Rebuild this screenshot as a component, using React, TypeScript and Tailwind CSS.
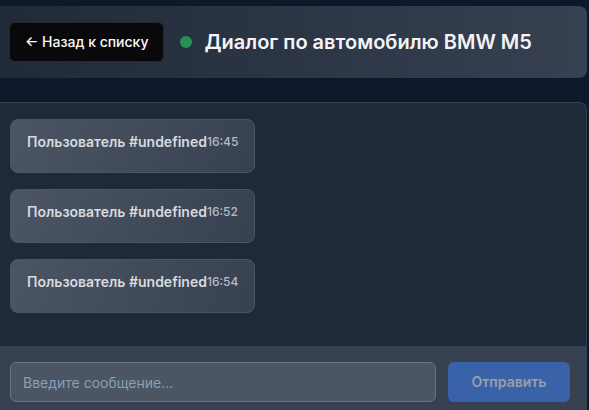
const messages = [
  { id: 1, author: 'Пользователь #undefined', time: '16:45' },
  { id: 2, author: 'Пользователь #undefined', time: '16:52' },
  { id: 3, author: 'Пользователь #undefined', time: '16:54' },
];

function Header() {
  return (
    <header className="flex items-center gap-4 rounded-r-lg bg-linear-to-r from-[#212a38] to-[#384152] py-4 pr-4 pl-[9px]">
      <button
        type="button"
        className="h-10 shrink-0 rounded-md border border-[#27272a] bg-[#09090b] px-[15px] text-sm font-medium text-[#fafafa]"
      >
        ← Назад к списку
      </button>
      <div className="flex min-w-0 items-center gap-3">
        <span className="size-3 shrink-0 rounded-full bg-[#279055]" />
        <h1 className="text-xl font-semibold whitespace-nowrap text-[#f3f4f6]">
          Диалог по автомобилю BMW M5
        </h1>
      </div>
    </header>
  );
}

function Message({ author, time }: { author: string; time: string }) {
  return (
    <li className="rounded-lg border border-[#4b5563] bg-linear-110 from-[#4b5563] to-[#374151] px-4 pt-3 pb-5">
      <div className="flex items-center text-[#d7dade]">
        <span className="text-sm font-semibold">{author}</span>
        <time className="text-xs font-medium text-[#b8bcc4]">{time}</time>
      </div>
    </li>
  );
}

function Composer() {
  return (
    <form
      className="flex gap-3 border-t border-[#1f2937] bg-[#374151] py-4 pr-4 pl-2.5"
      onSubmit={(event) => event.preventDefault()}
    >
      <input
        type="text"
        aria-label="Сообщение"
        placeholder="Введите сообщение..."
        className="h-10 min-w-0 flex-1 rounded-md border border-[#6b7280] bg-[#4b5563] px-3 text-sm text-white placeholder:text-[#8a9fb9]"
      />
      <button
        type="submit"
        disabled
        className="h-10 w-[122px] shrink-0 rounded-md bg-[#3a62a8] text-sm font-semibold text-[#989fac]"
      >
        Отправить
      </button>
    </form>
  );
}

export default function App() {
  return (
    <div className="h-screen overflow-hidden bg-[#0f172a] pt-1.5 pr-0.5 font-['Inter','Liberation_Sans',sans-serif]">
      <Header />
      <main className="mt-6 overflow-hidden rounded-r-lg border-y border-r border-[#374151] bg-[#1f2937]">
        <ul className="flex flex-col items-start gap-4 px-2.5 pt-4 pb-8">
          {messages.map((message) => (
            <Message key={message.id} author={message.author} time={message.time} />
          ))}
        </ul>
        <Composer />
      </main>
    </div>
  );
}
